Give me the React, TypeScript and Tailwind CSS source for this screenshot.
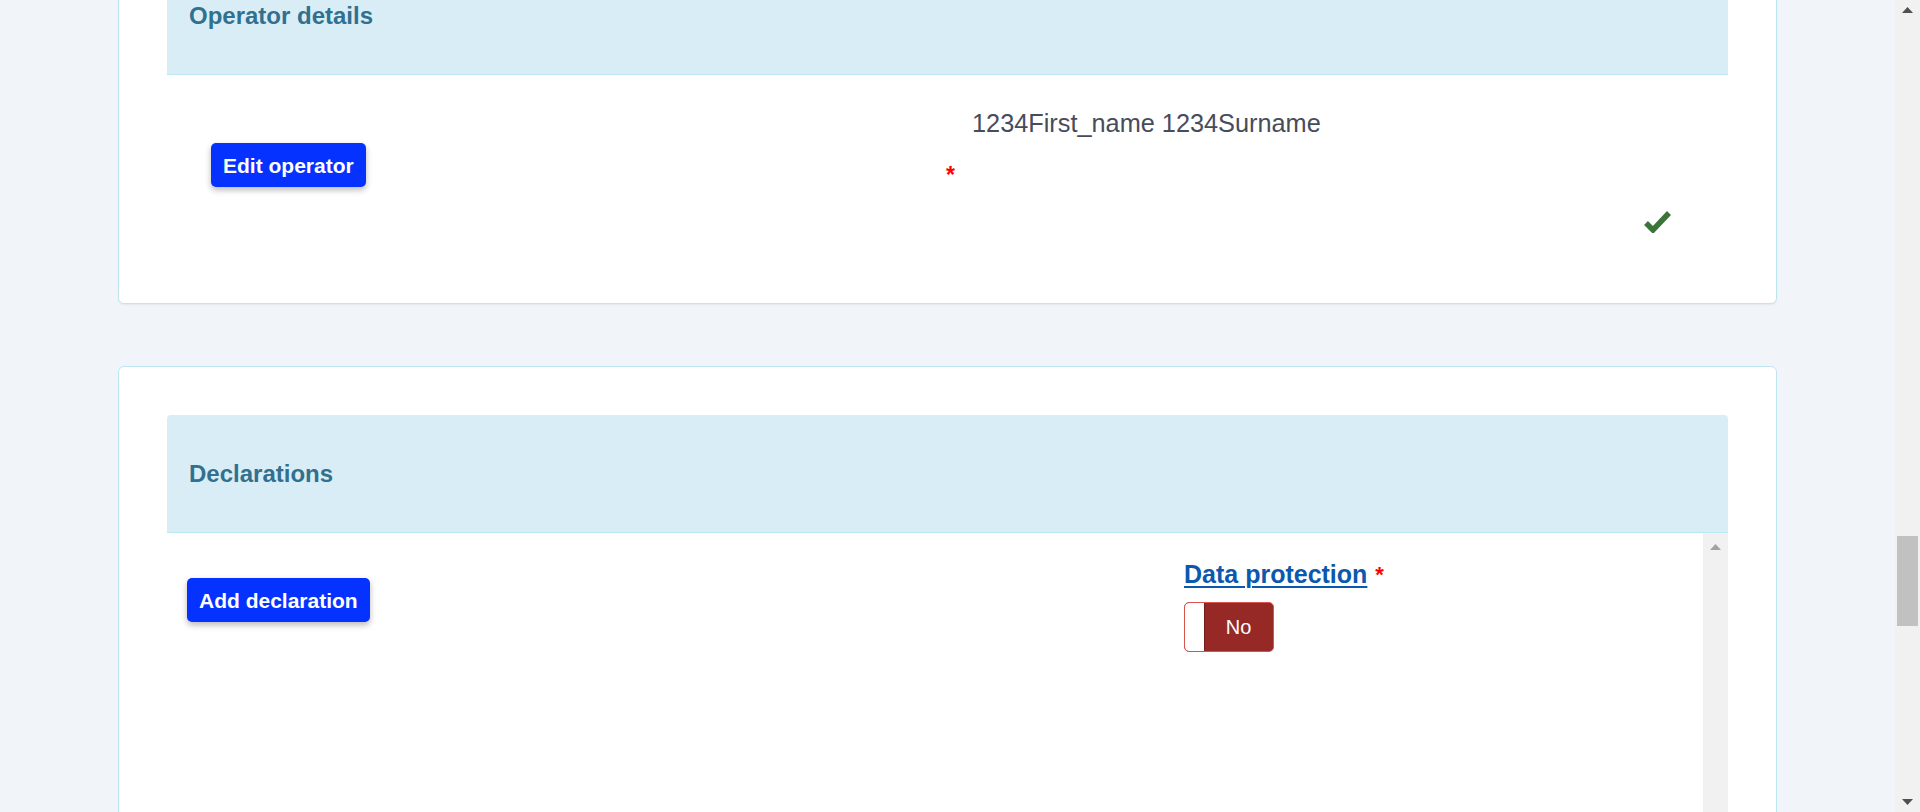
import React from 'react';

const font = "font-['Liberation_Sans',Arial,Helvetica,sans-serif]";

const PanelHeader: React.FC<{ title: string }> = ({ title }) => (
  <div className="flex h-[118px] items-center rounded-t-[4px] border-b border-[#bce8f1] bg-[#d9edf7] pl-[22px]">
    <h2 className="text-[24px] font-bold leading-[28px] text-[#31708f]">{title}</h2>
  </div>
);

const BlueButton: React.FC<{ label: string }> = ({ label }) => (
  <button className="h-[44px] rounded-[5px] bg-[#0532ff] px-3 text-[21px] font-bold leading-none text-white shadow-[0_3px_6px_rgba(0,0,0,0.28)]">
    {label}
  </button>
);

const Check = () => (
  <svg width="27" height="23" viewBox="0 0 27 23">
    <polyline points="2,13 9,20 25,3" fill="none" stroke="#3b7539" strokeWidth="5.5" strokeLinecap="butt" />
  </svg>
);

const Triangle: React.FC<{ up?: boolean; color: string }> = ({ up, color }) => (
  <svg width="11" height="6" viewBox="0 0 11 6">
    <polygon points={up ? '5.5,0 11,6 0,6' : '0,0 11,0 5.5,6'} fill={color} />
  </svg>
);

export default function App() {
  return (
    <div className={`flex h-[812px] w-full overflow-hidden bg-[#f1f5fa] ${font}`}>
      <main className="min-w-0 flex-1 px-[118px]">
        {/* Operator details */}
        <section className="mt-[-92px] rounded-[6px] border border-[#bde6f1] bg-white px-[48px] pb-[48px] pt-[48px] shadow-[0_1px_2px_rgba(0,0,0,0.06)]">
          <PanelHeader title="Operator details" />
          <div className="flex h-[180px]">
            <div className="flex w-[779px] shrink-0 items-center pl-[44px]">
              <BlueButton label="Edit operator" />
            </div>
            <div className="flex flex-1 flex-col pt-[34px]">
              <p className="ml-[26px] text-[25.3px] leading-[29px] text-[#474c5b]">1234First_name 1234Surname</p>
              <span className="mt-[25px] text-[23px] font-bold leading-[25px] text-[#ff0000]">*</span>
              <div className="mt-[22px] flex justify-end pr-[57px]">
                <Check />
              </div>
            </div>
          </div>
        </section>

        {/* Declarations */}
        <section className="mt-[62px] rounded-[6px] border border-[#bde6f1] bg-white px-[48px] pt-[48px]">
          <PanelHeader title="Declarations" />
          <div className="flex h-[320px]">
            <div className="flex flex-1">
              <div className="w-[1017px] shrink-0 pl-[20px] pt-[45px]">
                <BlueButton label="Add declaration" />
              </div>
              <div className="flex flex-col items-start pt-[27px]">
                <div className="flex items-start">
                  <a className="text-[25px] font-bold leading-[29px] text-[#0b58ae] underline decoration-[2px] underline-offset-[3px]">
                    Data protection
                  </a>
                  <span className="ml-[8px] text-[22px] font-bold leading-[29px] text-[#ff0000]">*</span>
                </div>
                <div className="mt-[13px] flex h-[50px] w-[90px] overflow-hidden rounded-[5px] border border-[#d9534f] bg-[#962926]">
                  <div className="w-[19px] rounded-l-[4px] bg-white shadow-[1px_0_1px_rgba(0,0,0,0.25)]" />
                  <div className="flex flex-1 items-center justify-center text-[20px] text-white">No</div>
                </div>
              </div>
            </div>
            <div className="flex w-[25px] flex-col items-center bg-[#f1f1f1] pt-[11px]">
              <Triangle up color="#a3a3a3" />
            </div>
          </div>
        </section>
      </main>

      {/* page scrollbar */}
      <div className="flex w-[25px] flex-col items-center bg-[#f1f1f1]">
        <div className="mt-[7px]">
          <Triangle up color="#505050" />
        </div>
        <div className="mt-[523px] h-[90px] w-[21px] bg-[#c1c1c1]" />
        <div className="flex-1" />
        <div className="mb-[7px]">
          <Triangle color="#505050" />
        </div>
      </div>
    </div>
  );
}
